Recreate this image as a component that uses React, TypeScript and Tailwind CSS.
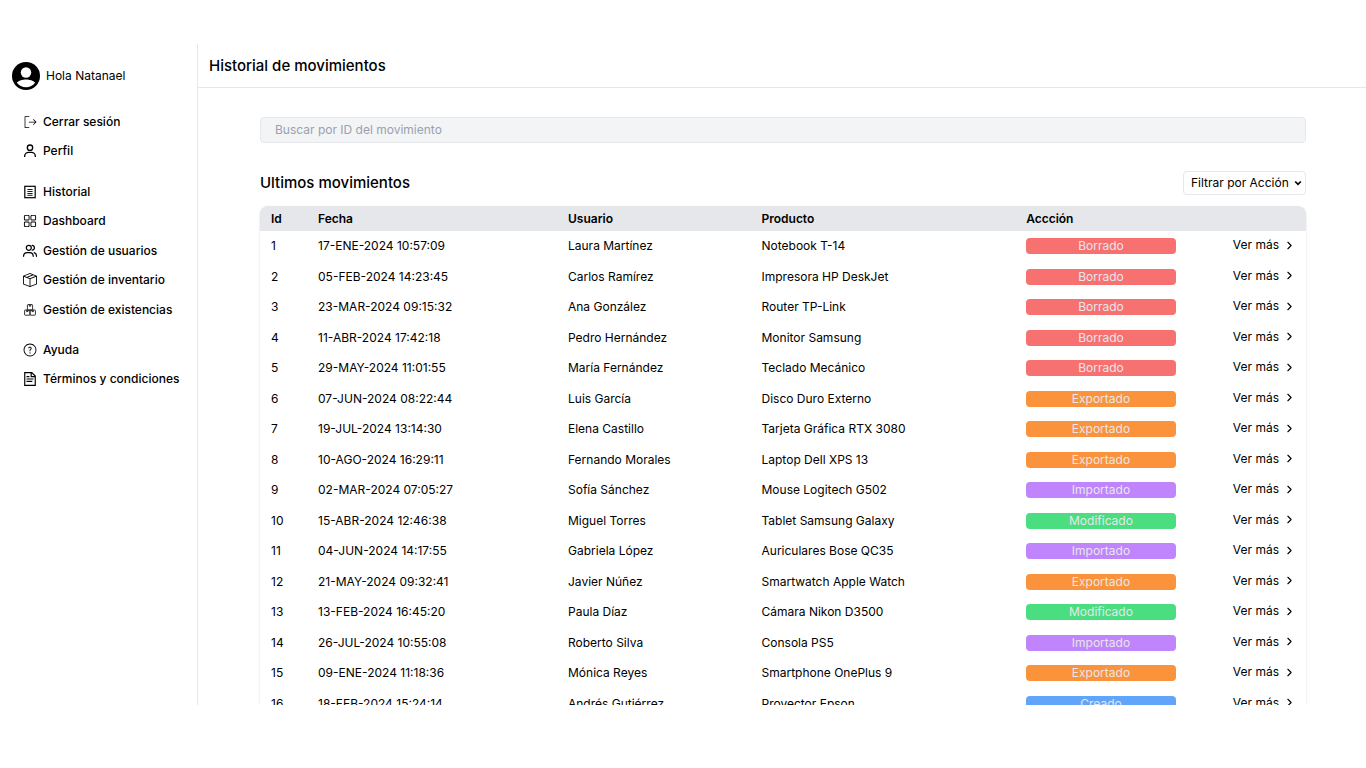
import type { ReactNode } from "react";
import { RxDashboard } from "react-icons/rx";
import { PiSignOutLight } from "react-icons/pi";
import { BiUser } from "react-icons/bi";
import { BsBoxSeam } from "react-icons/bs";
import { GoQuestion } from "react-icons/go";
import { GrDocumentText } from "react-icons/gr";
import { FiChevronRight } from "react-icons/fi";

type Accion = "Borrado" | "Exportado" | "Importado" | "Modificado" | "Creado";

interface Movimiento {
  id: number;
  fecha: string;
  usuario: string;
  producto: string;
  accion: Accion;
}

const colores: Record<Accion, string> = {
  Borrado: "bg-[#f87171]",
  Exportado: "bg-[#fb923c]",
  Importado: "bg-[#c084fc]",
  Modificado: "bg-[#4ade80]",
  Creado: "bg-[#60a5fa]",
};

const movimientos: Movimiento[] = [
  { id: 1, fecha: "17-ENE-2024 10:57:09", usuario: "Laura Martínez", producto: "Notebook T-14", accion: "Borrado" },
  { id: 2, fecha: "05-FEB-2024 14:23:45", usuario: "Carlos Ramírez", producto: "Impresora HP DeskJet", accion: "Borrado" },
  { id: 3, fecha: "23-MAR-2024 09:15:32", usuario: "Ana González", producto: "Router TP-Link", accion: "Borrado" },
  { id: 4, fecha: "11-ABR-2024 17:42:18", usuario: "Pedro Hernández", producto: "Monitor Samsung", accion: "Borrado" },
  { id: 5, fecha: "29-MAY-2024 11:01:55", usuario: "María Fernández", producto: "Teclado Mecánico", accion: "Borrado" },
  { id: 6, fecha: "07-JUN-2024 08:22:44", usuario: "Luis García", producto: "Disco Duro Externo", accion: "Exportado" },
  { id: 7, fecha: "19-JUL-2024 13:14:30", usuario: "Elena Castillo", producto: "Tarjeta Gráfica RTX 3080", accion: "Exportado" },
  { id: 8, fecha: "10-AGO-2024 16:29:11", usuario: "Fernando Morales", producto: "Laptop Dell XPS 13", accion: "Exportado" },
  { id: 9, fecha: "02-MAR-2024 07:05:27", usuario: "Sofía Sánchez", producto: "Mouse Logitech G502", accion: "Importado" },
  { id: 10, fecha: "15-ABR-2024 12:46:38", usuario: "Miguel Torres", producto: "Tablet Samsung Galaxy", accion: "Modificado" },
  { id: 11, fecha: "04-JUN-2024 14:17:55", usuario: "Gabriela López", producto: "Auriculares Bose QC35", accion: "Importado" },
  { id: 12, fecha: "21-MAY-2024 09:32:41", usuario: "Javier Núñez", producto: "Smartwatch Apple Watch", accion: "Exportado" },
  { id: 13, fecha: "13-FEB-2024 16:45:20", usuario: "Paula Díaz", producto: "Cámara Nikon D3500", accion: "Modificado" },
  { id: 14, fecha: "26-JUL-2024 10:55:08", usuario: "Roberto Silva", producto: "Consola PS5", accion: "Importado" },
  { id: 15, fecha: "09-ENE-2024 11:18:36", usuario: "Mónica Reyes", producto: "Smartphone OnePlus 9", accion: "Exportado" },
  { id: 16, fecha: "18-FEB-2024 15:24:14", usuario: "Andrés Gutiérrez", producto: "Proyector Epson", accion: "Creado" },
];

function Avatar() {
  return (
    <svg viewBox="0 0 28 28" className="size-7 shrink-0" aria-hidden="true">
      <circle cx="14" cy="14" r="14" fill="#000" />
      <circle cx="14" cy="10.5" r="5.2" fill="#fff" />
      <path d="M4.9 20.8C6.6 18.2 10.6 17.4 14 17.4s7.4.8 9.1 3.4A11.4 11.4 0 0 1 14 25.2 11.4 11.4 0 0 1 4.9 20.8Z" fill="#fff" />
    </svg>
  );
}

function IconoHistorial() {
  return (
    <svg viewBox="0 0 16 16" className="size-4" fill="none" stroke="currentColor" aria-hidden="true">
      <rect x="2.8" y="2.3" width="10.4" height="11.4" strokeWidth="1.2" />
      <path d="M5.4 5.5h5.2M5.4 7.5h5.2M5.4 9.5h5.2M5.4 11.3h5.2" strokeWidth="0.9" />
    </svg>
  );
}

function IconoUsuarios() {
  return (
    <svg viewBox="0 0 16 16" className="size-4" fill="none" stroke="currentColor" strokeWidth="1.2" strokeLinecap="round" aria-hidden="true">
      <circle cx="6.8" cy="4.8" r="2.5" />
      <path d="M1.6 13.3c0-2.4 1.6-3.7 3.6-3.7h2.6c2 0 3.4 1.3 3.4 3.7M10.2 2.4c1.5.2 2.2 1.200 2.200 2.400s-.7 2.200-2.200 2.400M12.200 9.700c1.500.4 2.300 1.700 2.300 3.600" />
    </svg>
  );
}

function IconoExistencias() {
  return (
    <svg viewBox="0 0 16 16" className="size-4" fill="none" stroke="currentColor" strokeWidth="0.8" strokeLinejoin="round" aria-hidden="true">
      <rect x="5.4" y="2.6" width="5.2" height="5.4" rx="0.6" />
      <rect x="2.600" y="8" width="5.400" height="5.2" rx="0.6" />
      <rect x="8" y="8" width="5.4" height="5.2" rx="0.6" />
      <path d="M7.3 2.6v1.6h1.400V2.600M4.600 8v1.600h1.400V8M10 8v1.600h1.400V8" />
    </svg>
  );
}

const menu: { icono: ReactNode; texto: string }[][] = [
  [
    { icono: <PiSignOutLight className="size-4" />, texto: "Cerrar sesión" },
    { icono: <BiUser className="size-4" />, texto: "Perfil" },
  ],
  [
    { icono: <IconoHistorial />, texto: "Historial" },
    { icono: <RxDashboard className="size-3.5" />, texto: "Dashboard" },
    { icono: <IconoUsuarios />, texto: "Gestión de usuarios" },
    { icono: <BsBoxSeam className="size-3.5" />, texto: "Gestión de inventario" },
    { icono: <IconoExistencias />, texto: "Gestión de existencias" },
  ],
  [
    { icono: <GoQuestion className="size-3.5" />, texto: "Ayuda" },
    { icono: <GrDocumentText className="size-3.5" />, texto: "Términos y condiciones" },
  ],
];

export default function App() {
  return (
    <div className="h-screen overflow-hidden bg-white pt-11 pb-[63px] font-[Inter,sans-serif] text-black">
      <div className="flex h-full overflow-hidden">
        <aside className="w-[198px] shrink-0 border-r border-gray-200 pl-3">
          <div className="flex items-center gap-[6px] pt-[18px] text-[12px] font-normal">
            <Avatar />
            <span>Hola Natanael</span>
          </div>
          <nav className="mt-[17px] flex flex-col gap-[11px] pl-[9px]">
            {menu.map((grupo, i) => (
              <ul key={i}>
                {grupo.map((item) => (
                  <li key={item.texto} className="odd:h-[29px] even:h-[30px]">
                    <a href="#" className="flex h-full items-center gap-1 text-[12px] font-medium">
                      <span className="flex w-[18px] justify-center">{item.icono}</span>
                      {item.texto}
                    </a>
                  </li>
                ))}
              </ul>
            ))}
          </nav>
        </aside>

        <main className="min-w-0 flex-1">
          <header className="flex h-11 items-center border-b border-gray-200 pt-px pl-[11px]">
            <h1 className="text-[15px] font-medium">Historial de movimientos</h1>
          </header>

          <div className="pt-[29px] pr-[60px] pl-[62px]">
            <input
              type="search"
              aria-label="Buscar por ID del movimiento"
              placeholder="Buscar por ID del movimiento"
              className="block h-[26px] w-full rounded-sm border border-gray-200 bg-gray-100 px-[14px] pb-px text-[12px] placeholder:text-gray-400"
            />

            <div className="mt-7 flex items-center justify-between">
              <h2 className="text-[15px] font-medium">Ultimos movimientos</h2>
              <div className="relative">
                <select
                  aria-label="Filtrar por Acción"
                  className="block h-6 w-[123px] appearance-none rounded-sm border border-gray-200 bg-white pl-[7px] text-[12px]"
                >
                  <option>Filtrar por Acción</option>
                  {Object.keys(colores).map((accion) => (
                    <option key={accion}>{accion}</option>
                  ))}
                </select>
                <svg viewBox="0 0 8 8" className="pointer-events-none absolute top-2 right-1 size-2" fill="none" stroke="currentColor" strokeWidth="1.7" aria-hidden="true">
                  <path d="M1.200 2.500 4 5.300l2.800-2.800" />
                </svg>
              </div>
            </div>

            <div className="mt-[11px] overflow-hidden rounded-lg shadow-sm">
              <table className="w-full table-fixed text-left text-[12px]">
                <thead className="bg-gray-200">
                  <tr className="h-[25px]">
                    <th className="w-[4.4%] pl-[11px] font-semibold">Id</th>
                    <th className="w-[23.9%] pl-3 font-semibold">Fecha</th>
                    <th className="w-[18.5%] pl-3 font-semibold">Usuario</th>
                    <th className="w-[25.3%] pl-3 font-semibold">Producto</th>
                    <th className="w-[16.6%] pl-3 font-semibold">Accción</th>
                    <th className="w-[11.3%]" aria-label="Detalle" />
                  </tr>
                </thead>
                <tbody>
                  {movimientos.map((m) => (
                    <tr key={m.id} className="odd:h-[30px] even:h-[31px]">
                      <td className="pl-[11px]">{m.id}</td>
                      <td className="pl-3">{m.fecha}</td>
                      <td className="pl-3">{m.usuario}</td>
                      <td className="pl-3">{m.producto}</td>
                      <td className="px-3">
                        <span className={`block h-4 rounded text-center leading-4 text-gray-200 ${colores[m.accion]}`}>
                          {m.accion}
                        </span>
                      </td>
                      <td className="pr-[10px] pb-[2px]">
                        <a href="#" className="flex items-center justify-end gap-1">
                          Ver más
                          <FiChevronRight className="size-[13px]" />
                        </a>
                      </td>
                    </tr>
                  ))}
                </tbody>
              </table>
            </div>
          </div>
        </main>
      </div>
    </div>
  );
}
